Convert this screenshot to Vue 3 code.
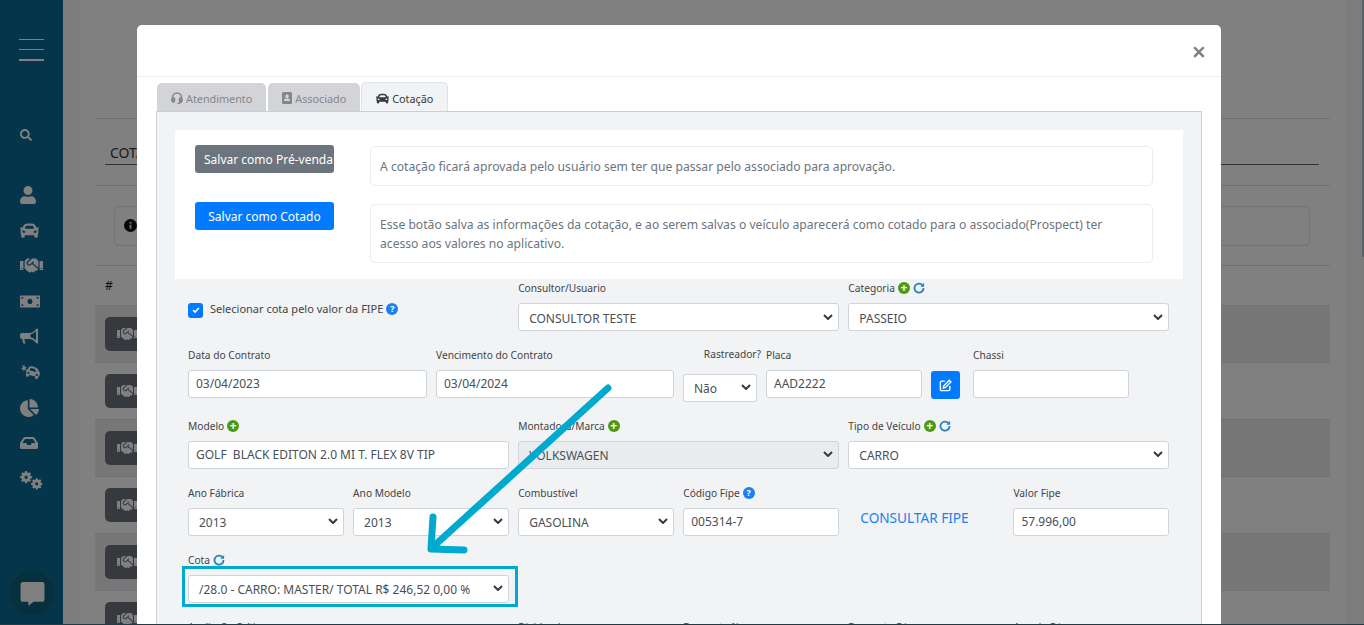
<script setup>
const handshakePath = "M434.7 64h-85.9c-8 0-15.7 3-21.6 8.4l-98.3 90c-.1.1-.2.3-.3.4-16.6 15.6-16.3 40.5-2.1 56 12.7 13.9 39.4 17.6 56.1 2.7.1-.1.3-.1.4-.2l79.9-73.2c6.5-5.9 16.7-5.5 22.6 1 6 6.5 5.5 16.6-1 22.6l-26.1 23.9L504 313.8c2.9 2.4 5.5 5 7.9 7.7V128l-54.6-54.6c-5.9-6-14.1-9.4-22.6-9.4zM544 128.2v223.9c0 17.7 14.3 32 32 32h64V128.2h-96zm48 223.9c-8.8 0-16-7.2-16-16s7.2-16 16-16 16 7.2 16 16-7.2 16-16 16zM0 384h64c17.7 0 32-14.3 32-32V128.2H0V384zm48-63.900c8.8 0 16 7.2 16 16s-7.2 16-16 16-16-7.2-16-16c0-8.900 7.2-16 16-16zm435.900 18.600L334.600 217.500l-30 27.500c-29.700 27.100-75.200 24.500-101.700-4.400-26.900-29.400-24.800-74.900 4.400-101.700L289.100 64h-83.800c-8.500 0-16.600 3.400-22.600 9.400L128 128v223.900h18.300l90.500 81.900c27.400 22.300 67.700 18.100 90-9.300l.2-.2 17.900 15.500c15.900 13 39.400 10.500 52.300-5.400l31.400-38.600 5.400 4.400c13.700 11.100 33.900 9.100 45-4.700l9.500-11.700c11.200-13.800 9.100-33.900-4.600-45.100z"

const carPath = "M499.99 176h-59.87l-16.64-41.6C406.38 91.63 365.57 64 319.5 64h-127c-46.06 0-86.88 27.63-103.99 70.4L71.87 176H12.01C4.2 176-1.53 183.34.37 190.91l6 24C7.7 220.25 12.5 224 18.01 224h20.07C24.65 235.73 16 252.78 16 272v48c0 16.12 6.16 30.67 16 41.93V416c0 17.67 14.33 32 32 32h32c17.67 0 32-14.33 32-32v-32h256v32c0 17.67 14.33 32 32 32h32c17.67 0 32-14.33 32-32v-54.07c9.84-11.25 16-25.8 16-41.93v-48c0-19.22-8.65-36.27-22.07-48H494c5.51 0 10.31-3.75 11.64-9.09l6-24c1.89-7.57-3.84-14.91-11.65-14.91zm-352.06-17.83c7.29-18.22 24.94-30.17 44.57-30.17h127c19.63 0 37.28 11.95 44.57 30.17L384 208H128l19.93-49.83zM96 319.8c-19.2 0-32-12.76-32-31.9S76.8 256 96 256s48 28.71 48 47.85-28.8 15.95-48 15.95zm320 0c-19.2 0-48 3.19-48-15.95S396.8 256 416 256s32 12.76 32 31.9-12.8 31.9-32 31.9z"

const sideIcons = [
  { name: "user", box: "0 0 448 512", w: 16, h: 18, d: "M224 256c70.7 0 128-57.3 128-128S294.7 0 224 0 96 57.3 96 128s57.3 128 128 128zm89.6 32h-16.7c-22.2 10.2-46.9 16-72.9 16s-50.6-5.800-72.9-16h-16.7C60.2 288 0 348.2 0 422.4V464c0 26.5 21.5 48 48 48h352c26.5 0 48-21.5 48-48v-41.6c0-74.2-60.2-134.4-134.4-134.4z" },
  { name: "car", box: "0 0 512 512", w: 19, h: 19, d: carPath },
  { name: "handshake", box: "0 0 640 512", w: 23, h: 19, d: handshakePath },
  { name: "money", box: "0 0 640 512", w: 20, h: 17, d: "M608 64H32C14.3 64 0 78.3 0 96v320c0 17.7 14.3 32 32 32h576c17.7 0 32-14.300 32-32V96c0-17.7-14.300-32-32-32zM48 400v-64c35.3 0 64 28.7 64 64zm64-288c0 35.3-28.7 64-64 64v-64zm208 232c-44.2 0-80-39.4-80-88s35.8-88 80-88 80 39.4 80 88-35.8 88-80 88zm272 56h-64c0-35.3 28.7-64 64-64zm0-224c-35.3 0-64-28.7-64-64h64z" },
  { name: "bullhorn", box: "0 0 576 512", w: 18, h: 17, d: "M544 0c-12 0-22 6-28 14-44 54-104 118-196 128H64c-35 0-64 29-64 64v64c0 35 29 64 64 64h18c-2 10-2 20-2 32 0 40 10 78 26 110h74c-20-32-34-68-34-110 0-12 2-22 4-32h170c92 10 152 74 196 128 6 8 16 14 28 14 18 0 32-14 32-32V32c0-18-14-32-32-32zm-32 384c-42-44-98-88-176-104V180c78-16 134-60 176-104z" },
  { name: "crash", box: "0 0 640 512", w: 21, h: 18, d: "M60 20l58 62 22-44 8 72 76 4-58 42 22 62-62-30-42 44 4-60-62-26 62-22zM330 82c12-4 62 8 132 28 50 14 76 38 94 76l30 66c18 14 26 36 20 58l-14 50c-4 16-16 28-30 32l-16 58c-4 16-20 26-36 22l-30-8c-16-4-26-20-22-36l8-32-190-50-8 30c-4 16-20 26-36 22l-30-8c-16-4-26-20-22-36l14-54c-10-14-14-32-10-50l14-50c6-22 22-36 44-42l40-60c12-16 24-26 48-16zm-4 60l-42 62 214 58-32-70c-10-20-20-28-36-32l-70-18c-16-4-24-8-34 0zM256 250c-18-4-32 2-36 18-4 16 4 28 22 32 22 6 50 14 54-4 4-16-22-40-40-46zm264 70c-18-4-48 8-52 26s26 18 48 24c18 4 30-2 34-18 4-14-12-28-30-32z" },
  { name: "pie", box: "0 0 544 512", w: 19, h: 18, d: "M527.79 288H290.5l158.03 158.03c6.04 6.04 15.98 6.53 22.19.68 38.7-36.46 65.32-85.61 73.13-140.86 1.34-9.46-6.51-17.85-16.06-17.85zm-15.83-64.8C503.72 103.74 408.26 8.28 288.8.04 279.68-.59 272 7.1 272 16.24V240h223.77c9.14 0 16.82-7.68 16.19-16.8zM224 288V50.71c0-9.55-8.39-17.4-17.84-16.06C86.99 51.49-4.1 155.6.14 280.37 4.5 408.51 114.83 513.59 243.03 511.98c50.4-.63 96.97-16.87 135.26-44.03 7.9-5.6 8.42-17.23 1.57-24.08z" },
  { name: "inbox", box: "0 0 576 512", w: 18, h: 16, d: "M567.94 243.91L462.25 85.37A48 48 0 0 0 422.31 64H153.69a48 48 0 0 0-39.94 21.37L8.06 243.91A48 48 0 0 0 0 270.53V400c0 26.51 21.49 48 48 48h480c26.51 0 48-21.49 48-48V270.53a48 48 0 0 0-8.06-26.62zM162.28 128h251.44l85.33 128H376l-32 64H232l-32-64H76.95z" },
]

const gearPath = "M170 0h60l10 48 36 16 42-26 42 42-26 42 16 36 48 10v60l-48 10-16 36 26 42-42 42-42-26-36 16-10 48h-60l-10-48-36-16-42 26-42-42 26-42-16-36-48-10v-60l48-10 16-36-26-42 42-42 42 26 36-16zM200 145a55 55 0 1 0 .1 0z"

const rows = [0, 1, 2, 3, 4, 5]
const chevron = "M1 1l4 4 4-4"
const syncArc = "M13.200 5.200A6 6 0 1 0 14 8"
const syncTip = "M14.800 1.200v5h-5z"
</script>

<template>
  <div class="page">
    <aside class="side">
      <div class="burger"><i></i><i></i><i class="thick"></i></div>
      <svg class="search" viewBox="0 0 512 512" width="12" height="12">
        <path d="M505 442.7L405.3 343c-4.5-4.5-10.6-7-17-7H372c27.6-35.3 44-79.7 44-128C416 93.1 322.9 0 208 0S0 93.1 0 208s93.1 208 208 208c48.3 0 92.7-16.4 128-44v16.3c0 6.4 2.5 12.5 7 17l99.7 99.7c9.4 9.4 24.6 9.4 33.9 0l28.3-28.3c9.4-9.4 9.4-24.6.1-34zM208 336c-70.7 0-128-57.2-128-128 0-70.7 57.2-128 128-128 70.7 0 128 57.2 128 128 0 70.7-57.2 128-128 128z" />
      </svg>
      <div class="side-list">
        <div v-for="ic in sideIcons" :key="ic.name" class="side-item">
          <svg :viewBox="ic.box" :width="ic.w" :height="ic.h"><path :d="ic.d" /></svg>
        </div>
        <div class="side-item gears">
          <svg viewBox="0 0 640 512" width="23" height="19">
            <path fill-rule="evenodd" :d="gearPath" transform="translate(0 -5) scale(.85)" />
            <path fill-rule="evenodd" :d="gearPath" transform="translate(305 190) scale(.8)" />
          </svg>
        </div>
      </div>
      <div class="chat">
        <svg viewBox="0 0 24 24" width="25" height="25"><path d="M3 1h18a2.500 2.500 0 0 1 2.500 2.500v14a2.500 2.500 0 0 1-2.500 2.500h-8l-5 4v-4H3A2.500 2.500 0 0 1 .5 17.500v-14A2.500 2.500 0 0 1 3 1z" /></svg>
      </div>
    </aside>

    <main class="content">
      <div class="inner">
        <div class="title-wrap"><span class="title">COTAÇÕES</span></div>
        <div class="notice">
          <svg viewBox="0 0 16 16" width="13" height="13"><circle cx="8" cy="8" r="8" fill="#111" /><rect x="6.800" y="7" width="2.400" height="5" fill="#ddd" /><rect x="6.800" y="3.500" width="2.400" height="2.200" fill="#ddd" /></svg>
        </div>
        <div class="thead">#</div>
        <div v-for="r in rows" :key="r" class="trow" :class="{ odd: r % 2 === 0 }">
          <span class="row-btn">
            <svg viewBox="0 0 640 512" width="20" height="18"><path :d="handshakePath" /></svg>
          </span>
        </div>
      </div>
    </main>
    <div class="scroll"><i></i></div>
  </div>

  <div class="backdrop"></div>

  <div class="overlay">
    <section class="modal">
      <header class="modal-head"><span class="close">×</span></header>
      <div class="modal-body">
        <nav class="tabs">
          <a class="tab">
            <svg viewBox="0 0 24 24" width="12" height="12" fill="none" stroke="currentColor" stroke-width="3"><path d="M3 15v-4a9 9 0 0 1 18 0v4" /><rect x="2" y="12" width="5" height="8" rx="2" fill="currentColor" /><rect x="17" y="12" width="5" height="8" rx="2" fill="currentColor" /><path d="M19 20c0 2-3 3-6 3" /></svg>
            Atendimento
          </a>
          <a class="tab">
            <svg viewBox="0 0 20 24" width="10" height="12"><path fill="currentColor" fill-rule="evenodd" d="M3 0h14a3 3 0 0 1 3 3v18a3 3 0 0 1-3 3H3a3 3 0 0 1-3-3V3a3 3 0 0 1 3-3zM10 5a3.500 3.500 0 1 0 .1 0zM4 18h12v-1.500c0-2-2-3.500-4-3.500H8c-2 0-4 1.500-4 3.500z" /></svg>
            Associado
          </a>
          <a class="tab active">
            <svg viewBox="0 0 512 512" width="13" height="13"><path fill="currentColor" :d="carPath" /></svg>
            Cotação
          </a>
        </nav>

        <div class="panel">
          <div class="actions">
            <div class="action-btns">
              <button class="btn gray">Salvar como Pré-venda</button>
              <button class="btn blue">Salvar como Cotado</button>
            </div>
            <div class="action-notes">
              <p class="note">A cotação ficará aprovada pelo usuário sem ter que passar pelo associado para aprovação.</p>
              <p class="note tall">Esse botão salva as informações da cotação, e ao serem salvas o veículo aparecerá como cotado para o associado(Prospect) ter acesso aos valores no aplicativo.</p>
            </div>
          </div>

          <form class="form">
            <div class="row r3 first">
              <div class="check-col">
                <span class="check"><svg viewBox="0 0 12 12" width="10" height="10"><path d="M2.500 6.200l2.400 2.400 4.600-5" fill="none" stroke="#fff" stroke-width="2" /></svg></span>
                <span class="check-label">Selecionar cota pelo valor da FIPE</span>
                <span class="q">?</span>
              </div>
              <div>
                <label>Consultor/Usuario</label>
                <div class="select"><span>CONSULTOR TESTE</span><svg viewBox="0 0 10 6" width="10" height="6"><path :d="chevron" /></svg></div>
              </div>
              <div>
                <label>Categoria
                  <span class="plus">+</span>
                  <svg class="sync" viewBox="0 0 16 16" width="12" height="12"><path :d="syncArc" /><path class="sync-tip" :d="syncTip" /></svg>
                </label>
                <div class="select"><span>PASSEIO</span><svg viewBox="0 0 10 6" width="10" height="6"><path :d="chevron" /></svg></div>
              </div>
            </div>

            <div class="row r-contract">
              <div><label>Data do Contrato</label><div class="input">03/04/2023</div></div>
              <div><label>Vencimento do Contrato</label><div class="input">03/04/2024</div></div>
              <div class="tracker">
                <label class="tracker-label">Rastreador?</label>
                <div class="select"><span>Não</span><svg viewBox="0 0 10 6" width="10" height="6"><path :d="chevron" /></svg></div>
              </div>
              <div><label>Placa</label><div class="input">AAD2222</div></div>
              <div class="edit-col">
                <button type="button" class="edit">
                  <svg viewBox="0 0 24 24" width="13" height="13" fill="none" stroke="#fff" stroke-width="2.600"><path d="M11 4H5a2.500 2.500 0 0 0-2.500 2.500V19A2.500 2.500 0 0 0 5 21.500h12.500A2.500 2.500 0 0 0 20 19v-6" /><path d="M19 2.500l3 3L12 15.500l-4 1 1-4z" /></svg>
                </button>
              </div>
              <div><label>Chassi</label><div class="input"></div></div>
            </div>

            <div class="row r3">
              <div><label>Modelo <span class="plus">+</span></label><div class="input">GOLF&nbsp; BLACK EDITON 2.0 MI T. FLEX 8V TIP</div></div>
              <div>
                <label>Montadora/Marca <span class="plus">+</span></label>
                <div class="select off"><span>VOLKSWAGEN</span><svg viewBox="0 0 10 6" width="10" height="6"><path :d="chevron" /></svg></div>
              </div>
              <div>
                <label>Tipo de Veículo
                  <span class="plus">+</span>
                  <svg class="sync" viewBox="0 0 16 16" width="12" height="12"><path :d="syncArc" /><path class="sync-tip" :d="syncTip" /></svg>
                </label>
                <div class="select"><span>CARRO</span><svg viewBox="0 0 10 6" width="10" height="6"><path :d="chevron" /></svg></div>
              </div>
            </div>

            <div class="row r6">
              <div><label>Ano Fábrica</label><div class="select"><span>2013</span><svg viewBox="0 0 10 6" width="10" height="6"><path :d="chevron" /></svg></div></div>
              <div><label>Ano Modelo</label><div class="select"><span>2013</span><svg viewBox="0 0 10 6" width="10" height="6"><path :d="chevron" /></svg></div></div>
              <div><label>Combustível</label><div class="select"><span>GASOLINA</span><svg viewBox="0 0 10 6" width="10" height="6"><path :d="chevron" /></svg></div></div>
              <div><label>Código Fipe <span class="q">?</span></label><div class="input">005314-7</div></div>
              <div class="fipe-link"><a>CONSULTAR FIPE</a></div>
              <div><label>Valor Fipe</label><div class="input">57.996,00</div></div>
            </div>

            <div class="row r3">
              <div>
                <label>Cota
                  <svg class="sync" viewBox="0 0 16 16" width="12" height="12"><path :d="syncArc" /><path class="sync-tip" :d="syncTip" /></svg>
                </label>
                <div class="select"><span>/28.0 - CARRO: MASTER/ TOTAL R$ 246,52 0,00 %</span><svg viewBox="0 0 10 6" width="10" height="6"><path :d="chevron" /></svg></div>
              </div>
            </div>

            <div class="row r6">
              <div><label>Avaliação Crítica</label></div>
              <div></div>
              <div><label>Dividendo</label></div>
              <div><label>Desconto %</label></div>
              <div><label>Desconto R$</label></div>
              <div><label>Acordo R$</label></div>
            </div>
          </form>
        </div>
      </div>
    </section>

    <svg class="marks" width="1364" height="625" viewBox="0 0 1364 625">
      <rect x="183.500" y="567.500" width="333" height="38" fill="none" stroke="#00a9ce" stroke-width="3" />
      <path d="M608 388L435 545M433 517l-2 32 33 1" fill="none" stroke="#00a9ce" stroke-width="7" stroke-linecap="round" stroke-linejoin="round" />
    </svg>
  </div>
</template>

<style scoped>
.page {
  display: flex;
  height: 624px;
  overflow: hidden;
  background: #fff;
  font-family: "Noto Sans", "Open Sans", sans-serif;
}

.side {
  width: 63px;
  flex: none;
  display: flex;
  flex-direction: column;
  align-items: center;
  background: #086a94;
  position: relative;
}

.burger {
  width: 25px;
  margin: 39px 0 0 0;
  display: flex;
  flex-direction: column;
  gap: 9px;
}
.burger i {
  display: block;
  height: 1px;
  background: #fff;
}
.burger i.thick {
  height: 2px;
}

.search {
  margin: 68px 12px 0 0;
  fill: #fff;
}

.side-list {
  margin-top: 36px;
  display: flex;
  flex-direction: column;
}
.side-item {
  height: 35.500px;
  width: 63px;
  box-sizing: border-box;
  display: flex;
  align-items: center;
  padding-left: 20px;
}
.side-item svg {
  fill: #fff;
}
.side-item.gears {
  margin-top: 2px;
}

.chat {
  position: absolute;
  left: 10px;
  top: 571px;
  width: 44px;
  height: 44px;
  border-radius: 50%;
  background: #0c6076;
  display: flex;
  align-items: center;
  justify-content: center;
}
.chat svg {
  fill: #fff;
}

.content {
  flex: 1;
  padding: 0 17px;
  background: #f7f8fa;
}
.inner {
  height: 100%;
  box-sizing: border-box;
  background: #fff;
  padding: 118px 15px 0;
}

.title-wrap {
  box-sizing: border-box;
  border-top: 1px solid #dee2e6;
  border-bottom: 1px solid #dee2e6;
  height: 68px;
  padding: 24px 11px 0 10px;
}
.title {
  display: block;
  border-bottom: 1px solid #5a6472;
  padding: 0 5px 2px;
  font-size: 14px;
  color: #343a40;
  line-height: 19px;
}

.notice {
  box-sizing: border-box;
  height: 80px;
  border-bottom: 1px solid #dee2e6;
  position: relative;
  display: flex;
  align-items: center;
}
.notice::before {
  content: "";
  position: absolute;
  left: 19px;
  right: 20px;
  top: 20px;
  height: 38px;
  border: 1px solid #e4e6e9;
  border-radius: 5px;
}
.notice svg {
  margin-left: 29px;
  position: relative;
}

.thead {
  box-sizing: border-box;
  height: 40px;
  padding: 10px;
  font-size: 12px;
  line-height: 19px;
  color: #111;
  border-bottom: 1px solid #dee2e6;
}

.trow {
  height: 57px;
  padding: 11px 10px;
  border-bottom: 1px solid #dee2e6;
  box-sizing: border-box;
}
.trow.odd {
  background: #eeeeee;
}
.row-btn {
  display: flex;
  align-items: center;
  padding-left: 12px;
  width: 120px;
  height: 34px;
  border-radius: 5px;
  background: #6c757d;
}
.row-btn svg {
  fill: #fff;
}

.scroll {
  width: 2px;
  flex: none;
  background: #f4f4f4;
}
.scroll i {
  display: block;
  height: 257px;
  background: #bdc0c4;
}

.backdrop {
  position: fixed;
  inset: 0 0 1px 0;
  background: #000;
  opacity: 0.497;
}

.overlay {
  position: fixed;
  left: 0;
  top: 0;
  width: 1364px;
  height: 624px;
  overflow: hidden;
  font-family: "Noto Sans", "Open Sans", sans-serif;
}

.modal {
  width: 1084px;
  margin: 25px 0 0 137px;
  height: 700px;
  background: #fff;
  border-radius: 5px 5px 0 0;
}

.modal-head {
  box-sizing: border-box;
  height: 52px;
  border-bottom: 1px solid #e9ecef;
  display: flex;
  justify-content: flex-end;
  align-items: center;
  padding: 2px 15px 0 0;
}
.close {
  font-size: 25px;
  font-weight: 600;
  color: #7d7d7d;
  line-height: 1;
}

.modal-body {
  padding: 5px 19px 0;
}

.tabs {
  display: flex;
  align-items: flex-end;
  padding-left: 1px;
  gap: 2px;
  height: 29px;
}
.tab {
  height: 28px;
  box-sizing: border-box;
  padding: 2px 14px 0;
  display: flex;
  align-items: center;
  gap: 3px;
  border-radius: 5px 5px 0 0;
  background: #d3d4d8;
  color: #85868a;
  font-size: 10.800px;
}
.tab.active {
  height: 29px;
  margin-left: -1px;
  background: #f1f3f5;
  color: #343a40;
  border: 1px solid #dfe1e4;
  border-bottom: none;
}

.panel {
  border: 1px solid #ccced1;
  background: #f1f3f5;
  padding: 18px 18px 0;
  width: 1046px;
  box-sizing: border-box;
}

.actions {
  display: flex;
  background: #fff;
  height: 149px;
  padding: 15px 30px 0 20px;
  box-sizing: border-box;
  gap: 36px;
}
.action-btns {
  width: 139px;
  flex: none;
  display: flex;
  flex-direction: column;
  gap: 29px;
}
.btn {
  height: 28px;
  border: none;
  border-radius: 3px;
  color: #fff;
  font-family: inherit;
  font-size: 12px;
  padding: 0;
  white-space: nowrap;
}
.btn.gray {
  background: #6c757d;
  text-align: left;
  padding-left: 9px;
}
.btn.blue {
  background: #007bff;
}

.action-notes {
  flex: 1;
  display: flex;
  flex-direction: column;
  gap: 18px;
  padding-top: 1px;
}
.note {
  margin: 0;
  border: 1px solid #e9ecef;
  border-radius: 5px;
  height: 40px;
  box-sizing: border-box;
  padding: 0 9px;
  font-size: 12.150px;
  line-height: 40px;
  color: #6c757d;
}
.note.tall {
  height: 59px;
  padding: 10px 9px;
  line-height: 19px;
}

.form {
  padding: 0 14px 0 13px;
  color: #444;
  font-size: 12px;
}

.row {
  display: grid;
  column-gap: 9.500px;
  margin-top: 14.500px;
}
.row.first {
  margin-top: -1px;
}
.row.first .select {
  padding-top: 4px;
}
.r3 {
  grid-template-columns: repeat(3, 1fr);
}
.r6 {
  grid-template-columns: repeat(6, 1fr);
}
.r-contract {
  grid-template-columns: 239px 238px 74px 156px 33px 156px;
  column-gap: 9px;
}

label {
  display: flex;
  align-items: center;
  gap: 3px;
  height: 18px;
  margin-bottom: 7px;
  padding-top: 1px;
  box-sizing: border-box;
  font-size: 10.200px;
  color: #444;
  white-space: nowrap;
}

.input,
.select {
  height: 27.500px;
  box-sizing: border-box;
  background: #fff;
  border: 1px solid #ced4da;
  border-radius: 3px;
  font-size: 12px;
  color: #495057;
  line-height: 25.500px;
  padding: 0 7px;
  white-space: nowrap;
  overflow: hidden;
}
.select {
  display: flex;
  align-items: center;
  justify-content: space-between;
  padding: 2px 5px 0 10px;
}
.select svg {
  flex: none;
  margin-top: -3px;
}
.select svg path {
  fill: none;
  stroke: #343a40;
  stroke-width: 2;
}
.select.off {
  background: #e9ecef;
}

.check-col {
  display: flex;
  align-items: center;
  gap: 3px;
  height: 18px;
  margin-top: 23px;
  font-size: 11px;
  color: #444;
  white-space: nowrap;
}
.check-label {
  margin-bottom: 3px;
}
.check-col .q {
  margin-bottom: 2px;
}
.check {
  width: 15px;
  height: 15px;
  border-radius: 3px;
  background: #007bff;
  display: flex;
  align-items: center;
  justify-content: center;
  margin-right: 4px;
}

.q,
.plus {
  width: 12px;
  height: 12px;
  border-radius: 50%;
  color: #fff;
  font-weight: 700;
  line-height: 12px;
  text-align: center;
  flex: none;
}
.q {
  background: #1a82ef;
  font-size: 9px;
}
.plus {
  background: #4a9a16;
  font-size: 12px;
}
.sync {
  flex: none;
}
.sync path {
  fill: none;
  stroke: #2581c4;
  stroke-width: 2.400;
}
.sync path.sync-tip {
  fill: #2581c4;
  stroke: none;
}

.tracker-label {
  justify-content: flex-end;
  margin: -1px -4px 12px 0;
}

.edit-col {
  padding-top: 26px;
}
.edit {
  width: 29px;
  height: 28px;
  border: none;
  border-radius: 3px;
  background: #007bff;
  padding: 0;
  display: flex;
  align-items: center;
  justify-content: center;
}

.fipe-link {
  padding: 27px 0 0 12px;
  color: #1a82ef;
  font-size: 13.600px;
  line-height: 16px;
  white-space: nowrap;
}

.marks {
  position: absolute;
  left: 0;
  top: 0;
  pointer-events: none;
}
</style>

<style>
html,
body {
  margin: 0;
  height: 100%;
  overflow: hidden;
  background: #1f3a44;
}
</style>
